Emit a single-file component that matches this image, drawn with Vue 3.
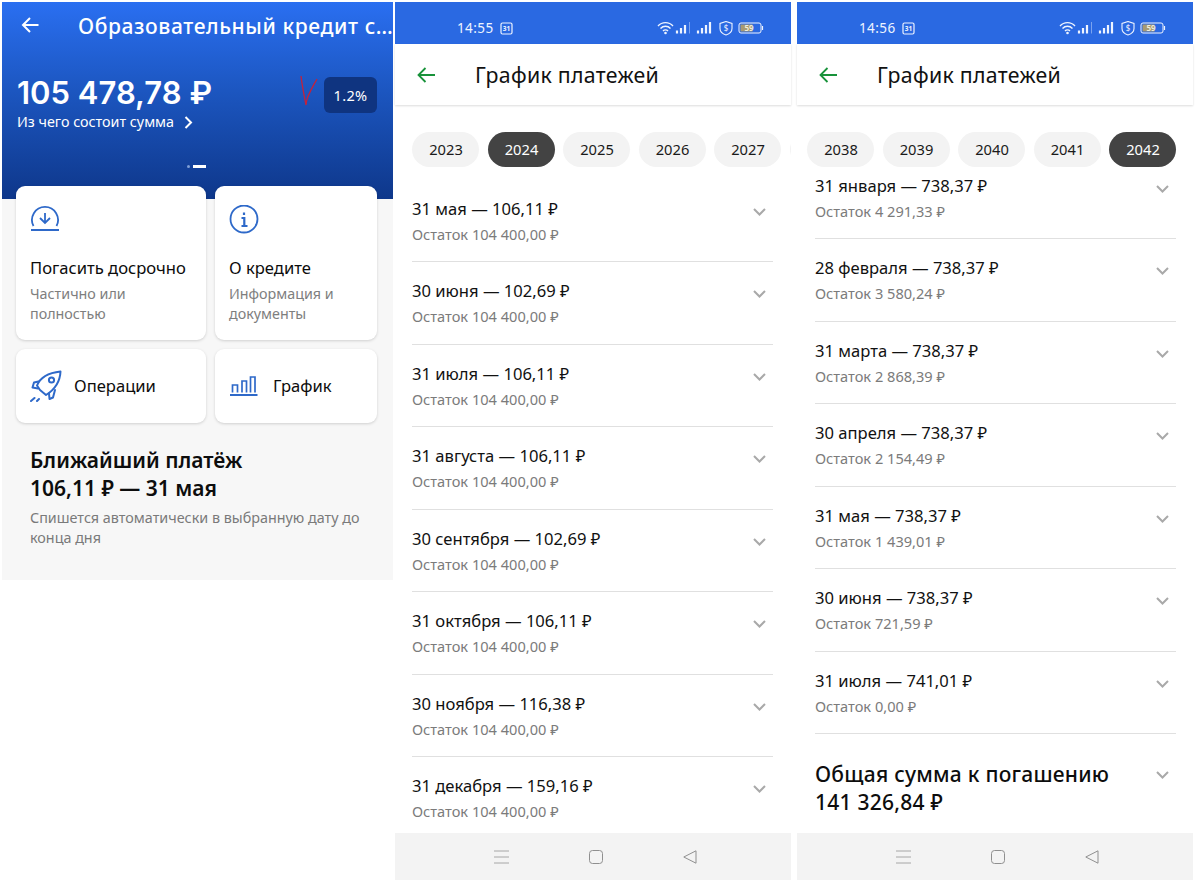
<script setup>
const screens = [
  {
    time: '14:55',
    cls: 'second',
    years: [
      { y: '2023' }, { y: '2024', on: true }, { y: '2025' }, { y: '2026' }, { y: '2027' }, { y: '' }
    ],
    rows: [
      ['31 мая — 106,11 ₽', 'Остаток 104 400,00 ₽'],
      ['30 июня — 102,69 ₽', 'Остаток 104 400,00 ₽'],
      ['31 июля — 106,11 ₽', 'Остаток 104 400,00 ₽'],
      ['31 августа — 106,11 ₽', 'Остаток 104 400,00 ₽'],
      ['30 сентября — 102,69 ₽', 'Остаток 104 400,00 ₽'],
      ['31 октября — 106,11 ₽', 'Остаток 104 400,00 ₽'],
      ['30 ноября — 116,38 ₽', 'Остаток 104 400,00 ₽'],
      ['31 декабря — 159,16 ₽', 'Остаток 104 400,00 ₽']
    ]
  },
  {
    time: '14:56',
    cls: 'third',
    years: [
      { y: '2038' }, { y: '2039' }, { y: '2040' }, { y: '2041' }, { y: '2042', on: true }
    ],
    rows: [
      ['31 января — 738,37 ₽', 'Остаток 4 291,33 ₽'],
      ['28 февраля — 738,37 ₽', 'Остаток 3 580,24 ₽'],
      ['31 марта — 738,37 ₽', 'Остаток 2 868,39 ₽'],
      ['30 апреля — 738,37 ₽', 'Остаток 2 154,49 ₽'],
      ['31 мая — 738,37 ₽', 'Остаток 1 439,01 ₽'],
      ['30 июня — 738,37 ₽', 'Остаток 721,59 ₽'],
      ['31 июля — 741,01 ₽', 'Остаток 0,00 ₽']
    ],
    total: ['Общая сумма к погашению', '141 326,84 ₽']
  }
]
</script>

<template>
  <div class="page">
    <section class="loan">
      <div class="hero">
        <div class="hero-top">
          <svg class="hero-back" width="18" height="18" viewBox="0 0 18 18" fill="none" stroke="#fff" stroke-width="2">
            <path d="M17.500 9H2M9 2 2 9l7 7" />
          </svg>
          <span class="hero-title">Образовательный кредит с…</span>
        </div>
        <div class="hero-main">
          <div>
            <div class="amount">105 478,78 ₽</div>
            <div class="amount-sub">
              Из чего состоит сумма
              <svg width="9" height="13" viewBox="0 0 9 13" fill="none" stroke="#fff" stroke-width="2"><path d="m1.500 1 5.500 5.500-5.500 5.500" /></svg>
            </div>
          </div>
          <svg class="mark" width="18" height="31" viewBox="0 0 18 31" fill="none" stroke="#c4223c" stroke-width="1.300">
            <path d="M1 1c1 9 3 19 5 29 0-8 6-17 11-26" />
          </svg>
          <div class="rate">1.2%</div>
        </div>
        <div class="dots"><i class="dot"></i><i class="dash"></i></div>
      </div>

      <div class="cards">
        <div class="card tall">
          <svg class="card-icon" width="30" height="30" viewBox="0 2 30 30" fill="none" stroke="#2e69c9" stroke-width="1.800">
            <path d="M3.500 23a13 13 0 1 1 23 0M1 27h28" />
            <path d="M15 10v10M10 15l5 5 5-5" />
          </svg>
          <div class="card-title">Погасить досрочно</div>
          <div class="card-text">Частично или<br />полностью</div>
        </div>
        <div class="card tall">
          <svg class="card-icon" width="30" height="30" viewBox="0 0 30 30" fill="none" stroke="#2e69c9" stroke-width="1.800">
            <circle cx="15" cy="14" r="13.500" />
            <path d="M15 7.500v2.500M12.500 13H15.300v8M12.500 21h6" stroke-width="2.200" />
          </svg>
          <div class="card-title">О кредите</div>
          <div class="card-text">Информация и<br />документы</div>
        </div>
        <div class="card short">
          <svg width="32" height="32" viewBox="0 0 32 32" fill="none" stroke="#2e69c9" stroke-width="2" stroke-linejoin="round" stroke-linecap="round">
            <path d="M10 20 7 15.500C10 8 17 3 30.500 1.500 30 13 24 20 16 25Z" />
            <path d="M8.500 11.500 4 12.500l-1.500 5 5.500 1M19 23.500l.5 5.500 3.500-1.500 2-7.500" />
            <circle cx="21.500" cy="10" r="2.600" />
            <path d="M1 31l3.500-3M7 31l2-2" />
          </svg>
          <span class="card-title inline">Операции</span>
        </div>
        <div class="card short chart">
          <svg width="28" height="20" viewBox="0 0 28 20" fill="none" stroke="#2e69c9" stroke-width="1.700">
            <path d="M2.500 16.500V9h5v7.500M12 16.500V5h4.500v11.500M20.500 16.500V1h4.500v15.500" />
            <path d="M0 19h27.500" stroke-width="2" />
          </svg>
          <span class="card-title inline">График</span>
        </div>
      </div>

      <div class="next">
        <h2>Ближайший платёж<br />106,11 ₽ — 31 мая</h2>
        <p>Спишется автоматически в выбранную дату до конца дня</p>
      </div>
    </section>

    <section v-for="s in screens" :key="s.time" class="phone" :class="s.cls">
      <div class="status">
        <span class="time">{{ s.time }}</span>
        <svg class="cal" width="13" height="13" viewBox="0 0 13 13" fill="none" stroke="#eef4ff" stroke-width="1.200">
          <rect x="1" y="1" width="11" height="11" rx="1.500" />
          <text x="6.500" y="9" text-anchor="middle" fill="#eef4ff" stroke="none" font-size="6.500" font-family="Noto Sans, sans-serif" font-weight="700">31</text>
        </svg>
        <svg class="sys" width="107" height="15" viewBox="0 0 107 15" fill="none" stroke="#eef4ff">
          <path d="M1 5c4-4.500 11-4.500 15 0M3.500 7.500c2.800-3 7.200-3 10 0M6 10c1.400-1.500 3.600-1.500 5 0" stroke-width="1.400" />
          <circle cx="8.500" cy="12" r="1.300" fill="#eef4ff" stroke="none" />
          <path d="M20 9.500v3M24 7v5.500M28 4v8.500" stroke-width="2.200" />
          <path d="M32.500 1v11.500" stroke="#7ba3ef" stroke-width="1" />
          <path d="M41 9.500v3M45 7v5.500M49 4v8.500M53 1v11.500" stroke-width="2.200" />
          <path d="M69 .5 75 2.500v5c0 3.300-2.800 5.500-6 6.500-3.200-1-6-3.200-6-6.500v-5Z" stroke-width="1.100" />
          <text x="69" y="10" text-anchor="middle" fill="#eef4ff" stroke="none" font-size="8" font-family="Noto Sans, sans-serif">$</text>
          <rect x="82" y="2" width="22" height="10" rx="2" stroke-width="1" />
          <rect x="83.500" y="3.500" width="12" height="7" fill="#a89a72" stroke="none" />
          <text x="92" y="10" text-anchor="middle" fill="#f4f0dc" stroke="none" font-size="8" font-family="Noto Sans, sans-serif" font-weight="600">59</text>
          <path d="M105.500 5v4" stroke-width="1.200" />
        </svg>
      </div>
      <header class="bar">
        <svg width="18" height="16" viewBox="0 0 18 16" fill="none" stroke="#18923a" stroke-width="1.800">
          <path d="M18 8H1.500M8.500 1 1.500 8l7 7" />
        </svg>
        <h1>График платежей</h1>
      </header>
      <div class="years">
        <span v-for="(y, i) in s.years" :key="i" class="pill" :class="{ on: y.on }">{{ y.y }}</span>
      </div>
      <div class="list">
        <div class="list-inner">
          <div v-for="r in s.rows" :key="r[0]" class="row">
            <div>
              <div class="row-title">{{ r[0] }}</div>
              <div class="row-sub">{{ r[1] }}</div>
            </div>
            <svg class="chev" width="13" height="8" viewBox="0 0 13 8" fill="none" stroke="#a9a9a9" stroke-width="2"><path d="m1 1 5.500 5.500L12 1" /></svg>
          </div>
          <div v-if="s.total" class="total">
            <div class="total-text">{{ s.total[0] }}<br />{{ s.total[1] }}</div>
            <svg class="chev" width="13" height="8" viewBox="0 0 13 8" fill="none" stroke="#a9a9a9" stroke-width="2"><path d="m1 1 5.500 5.500L12 1" /></svg>
          </div>
        </div>
      </div>
      <footer class="nav">
        <svg width="15" height="14" viewBox="0 0 15 14" fill="none" stroke="#a6a6a6"><path d="M0 1h15M0 7h15M0 13h15" /></svg>
        <svg width="14" height="14" viewBox="0 0 14 14" fill="none" stroke="#8f8f8f"><rect x=".5" y=".5" width="13" height="13" rx="3" /></svg>
        <svg width="14" height="14" viewBox="0 0 14 14" fill="none" stroke="#8f8f8f"><path d="M13 .8v12.400L.8 7Z" stroke-linejoin="round" /></svg>
      </footer>
    </section>
  </div>
</template>

<style scoped>
.page {
  display: flex;
  align-items: flex-start;
  padding: 2px 0 0 2px;
  width: 1200px;
  height: 885px;
  box-sizing: border-box;
  overflow: hidden;
  background: #fff;
  font-family: "Noto Sans", sans-serif;
  color: #0d0d0d;
}

.loan {
  width: 391px;
  height: 578px;
  margin-right: 2px;
  background: #f7f7f7;
  flex: none;
}
.hero {
  height: 197px;
  box-sizing: border-box;
  padding: 0 15px;
  color: #fff;
  background: linear-gradient(#2a6ff1 0%, #1c56c0 45%, #0e378a 100%);
}
.hero-top {
  display: flex;
  align-items: center;
  height: 48px;
  padding-left: 4px;
}
.hero-back { margin: -3px 39px 0 0; flex: none; }
.hero-title {
  font-size: 21px;
  font-weight: 500;
  white-space: nowrap;
  letter-spacing: .6px;
}
.hero-main {
  display: flex;
  align-items: flex-start;
  margin-top: 23px;
  height: 62px;
}
.hero-main > div:first-child { width: 283px; }
.amount {
  font-family: Inter, sans-serif;
  font-size: 31px;
  font-weight: 600;
  line-height: 40px;
  white-space: nowrap;
}
.amount-sub {
  display: flex;
  align-items: center;
  gap: 10px;
  margin-top: -1px;
  font-size: 14.300px;
  line-height: 20px;
  white-space: nowrap;
}
.mark { margin-top: 2px; flex: none; }
.rate {
  width: 53px;
  height: 36px;
  margin: 4px 0 0 6px;
  border-radius: 6px;
  background: #0f3480;
  font-size: 14.500px;
  line-height: 37px;
  text-align: center;
  letter-spacing: .4px;
}
.dots {
  display: flex;
  justify-content: center;
  align-items: center;
  gap: 3px;
  margin: 30px 0 0 -2px;
}
.dot { width: 3px; height: 3px; border-radius: 50%; background: #7f9fd6; }
.dash { width: 13px; height: 3px; background: #fff; }

.cards {
  display: grid;
  grid-template-columns: 190px 162px;
  grid-template-rows: 154px 74px;
  gap: 9px;
  margin: -13px 0 0 14px;
}
.card {
  box-sizing: border-box;
  background: #fff;
  border-radius: 9px;
  box-shadow: 0 1px 3px rgba(0, 0, 0, .16);
}
.card.tall { padding: 19px 14px 0; }
.card-icon { display: block; }
.card-title {
  margin-top: 21px;
  font-size: 16.600px;
  line-height: 24px;
  white-space: nowrap;
  color: #0c0c0c;
}
.card-title.inline { margin: 0; }
.card-text {
  margin-top: 4px;
  font-size: 14.300px;
  line-height: 20px;
  color: #7e7e7e;
}
.card.short {
  display: flex;
  align-items: center;
  gap: 12px;
  padding: 0 14px;
}
.card.short.chart { gap: 15px; padding-left: 15px; }
.next { padding: 23px 28px 0; }
.next h2 {
  margin: 0;
  font-family: "Noto Sans", sans-serif;
  font-size: 21px;
  font-weight: 600;
  line-height: 28px;
}
.next p {
  margin: 6px 0 0;
  font-size: 14.350px;
  line-height: 20px;
  color: #7a7a7a;
}

.phone {
  display: flex;
  flex-direction: column;
  flex: none;
  width: 396px;
  height: 878px;
  background: #fff;
}
.phone.third { margin-left: 6px; }
.status {
  display: flex;
  align-items: center;
  flex: none;
  height: 42px;
  box-sizing: border-box;
  padding-top: 10px;
  background: #2a69e2;
  color: #eef4ff;
}
.time {
  margin-left: 62px;
  font-size: 13.500px;
  letter-spacing: .4px;
}
.cal { margin-left: 6px; }
.sys { margin-left: auto; margin-right: 27px; }
.bar {
  display: flex;
  align-items: center;
  flex: none;
  height: 61px;
  box-sizing: border-box;
  padding-left: 22px;
  box-shadow: 0 1px 2px rgba(0, 0, 0, .14);
  position: relative;
}
.bar h1 {
  margin: 0 0 0 40px;
  font-size: 21.300px;
  font-weight: 400;
  letter-spacing: .3px;
  color: #111;
}
.years {
  display: flex;
  gap: 8.500px;
  flex: none;
  height: 71px;
  box-sizing: border-box;
  padding: 27px 0 0 17px;
  overflow: hidden;
}
.third .years { height: 67px; padding-left: 10px; }
.pill {
  flex: none;
  width: 67px;
  height: 35px;
  box-sizing: border-box;
  padding-left: 1px;
  border-radius: 18px;
  background: #f3f3f3;
  font-size: 14.700px;
  line-height: 35px;
  text-align: center;
  color: #1a1a1a;
}
.pill.on { background: #434343; color: #fff; }
.list {
  flex: 1;
  min-height: 0;
  overflow: hidden;
}
.list-inner { margin-top: 3.500px; }
.third .list-inner { margin-top: -15.500px; }
.row {
  display: flex;
  justify-content: space-between;
  box-sizing: border-box;
  height: 82.500px;
  margin: 0 18px 0 17px;
  padding-top: 18px;
  border-bottom: 1px solid #e0e0e0;
}
.third .row { margin: 0 17px 0 18px; }
.row:last-child { border-bottom: none; }
.row-title {
  font-size: 16.600px;
  line-height: 22px;
  color: #111;
  white-space: nowrap;
}
.row-sub {
  margin-top: 4px;
  font-size: 14.600px;
  line-height: 20px;
  color: #7b7b7b;
  white-space: nowrap;
}
.chev { margin: 10px 7px 0 0; flex: none; }
.total {
  display: flex;
  justify-content: space-between;
  margin: 0 17px 0 18px;
  padding-top: 26px;
}
.total .chev { margin-top: 11px; }
.total-text {
  font-size: 21px;
  font-weight: 500;
  line-height: 28px;
  letter-spacing: .25px;
  white-space: nowrap;
}
.nav {
  display: flex;
  align-items: center;
  flex: none;
  gap: 80px;
  height: 47px;
  padding-left: 99px;
  background: #f3f3f3;
}
</style>
